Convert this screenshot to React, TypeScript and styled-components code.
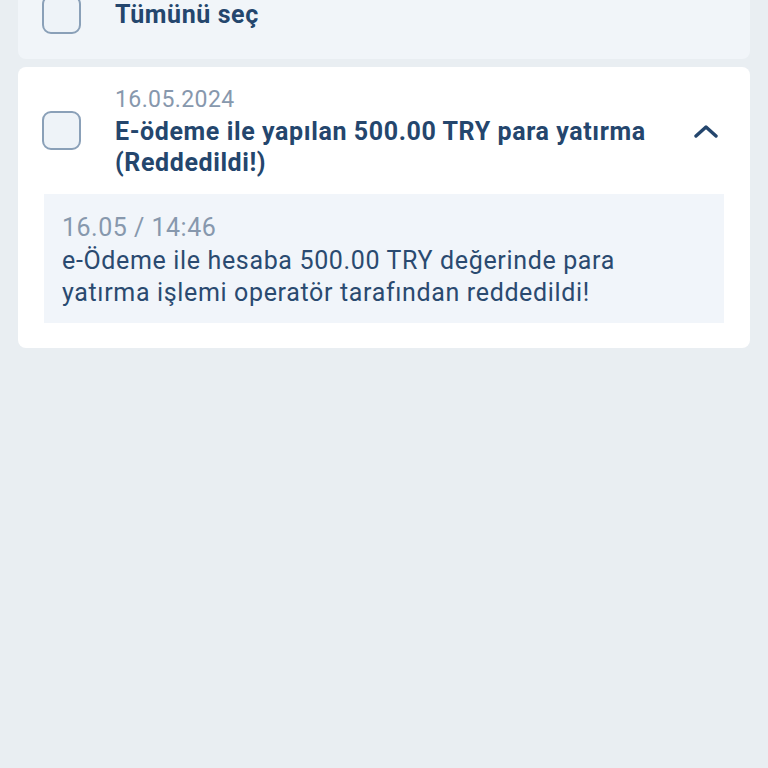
import React from "react";
import styled, { createGlobalStyle } from "styled-components";

const GlobalStyle = createGlobalStyle`
  html, body {
    margin: 0;
    padding: 0;
    background: #e9eef2;
    font-family: Roboto, "Noto Sans", sans-serif;
    overflow: hidden;
  }
`;

const Page = styled.div`
  min-height: 768px;
  padding: 0 18px;
  display: flex;
  flex-direction: column;
  gap: 8px;
`;

const SelectAllCard = styled.div`
  margin-top: -32px;
  background: #f1f5f9;
  border-radius: 8px;
  padding: 27px 24px 25px;
  display: flex;
  align-items: center;
  gap: 34px;
`;

const Checkbox = styled.div`
  width: 35px;
  height: 35px;
  flex-shrink: 0;
  border: 2px solid #8aa0b8;
  border-radius: 9px;
  background: #eef3f8;
`;

const SelectAllLabel = styled.div`
  font-size: 25px;
  font-weight: 700;
  letter-spacing: 0.6px;
  color: #24466d;
`;

const Card = styled.div`
  background: #ffffff;
  border-radius: 8px;
  padding: 18px 26px 25px;
`;

const Header = styled.div`
  display: grid;
  grid-template-columns: 39px 1fr 24px;
  column-gap: 34px;
  align-items: center;
  margin-left: -2px;
`;

const HeaderText = styled.div`
  display: flex;
  flex-direction: column;
  grid-column: 2;
`;

const DateText = styled.div`
  font-size: 23px;
  line-height: 26px;
  letter-spacing: 0.4px;
  margin-top: 2px;
  color: #8798ad;
`;

const Title = styled.div`
  font-size: 25px;
  line-height: 31px;
  font-weight: 700;
  letter-spacing: 0.6px;
  color: #24466d;
  margin-top: 3px;
`;

const CheckCell = styled.div`
  grid-column: 1;
  grid-row: 1;
  align-self: start;
  margin-top: 26px;
`;

const Toggle = styled.div`
  grid-column: 3;
  grid-row: 1;
  align-self: start;
  margin-top: 39px;
  margin-left: -6px;
  display: flex;
`;

const Details = styled.div`
  margin-top: 16px;
  background: #f1f5fa;
  padding: 18px 18px 14px;
`;

const Time = styled.div`
  font-size: 25px;
  line-height: 32px;
  letter-spacing: 0.5px;
  color: #8798ad;
`;

const Message = styled.div`
  font-size: 25px;
  line-height: 32px;
  letter-spacing: 0.65px;
  margin-top: 1px;
  color: #2a4a70;
`;

const ChevronUp = () => (
  <svg width="24" height="14" viewBox="0 0 24 14" fill="none">
    <path
      d="M2 12 L12 3 L22 12"
      stroke="#24466d"
      strokeWidth="3.4"
      strokeLinecap="round"
      strokeLinejoin="round"
    />
  </svg>
);

export default function App() {
  return (
    <Page>
      <GlobalStyle />
      <SelectAllCard>
        <Checkbox />
        <SelectAllLabel>Tümünü seç</SelectAllLabel>
      </SelectAllCard>

      <Card>
        <Header>
          <CheckCell>
            <Checkbox />
          </CheckCell>
          <HeaderText>
            <DateText>16.05.2024</DateText>
            <Title>E-ödeme ile yapılan 500.00 TRY para yatırma (Reddedildi!)</Title>
          </HeaderText>
          <Toggle>
            <ChevronUp />
          </Toggle>
        </Header>
        <Details>
          <Time>16.05 / 14:46</Time>
          <Message>
            e-Ödeme ile hesaba 500.00 TRY değerinde para yatırma işlemi operatör
            tarafından reddedildi!
          </Message>
        </Details>
      </Card>
    </Page>
  );
}
